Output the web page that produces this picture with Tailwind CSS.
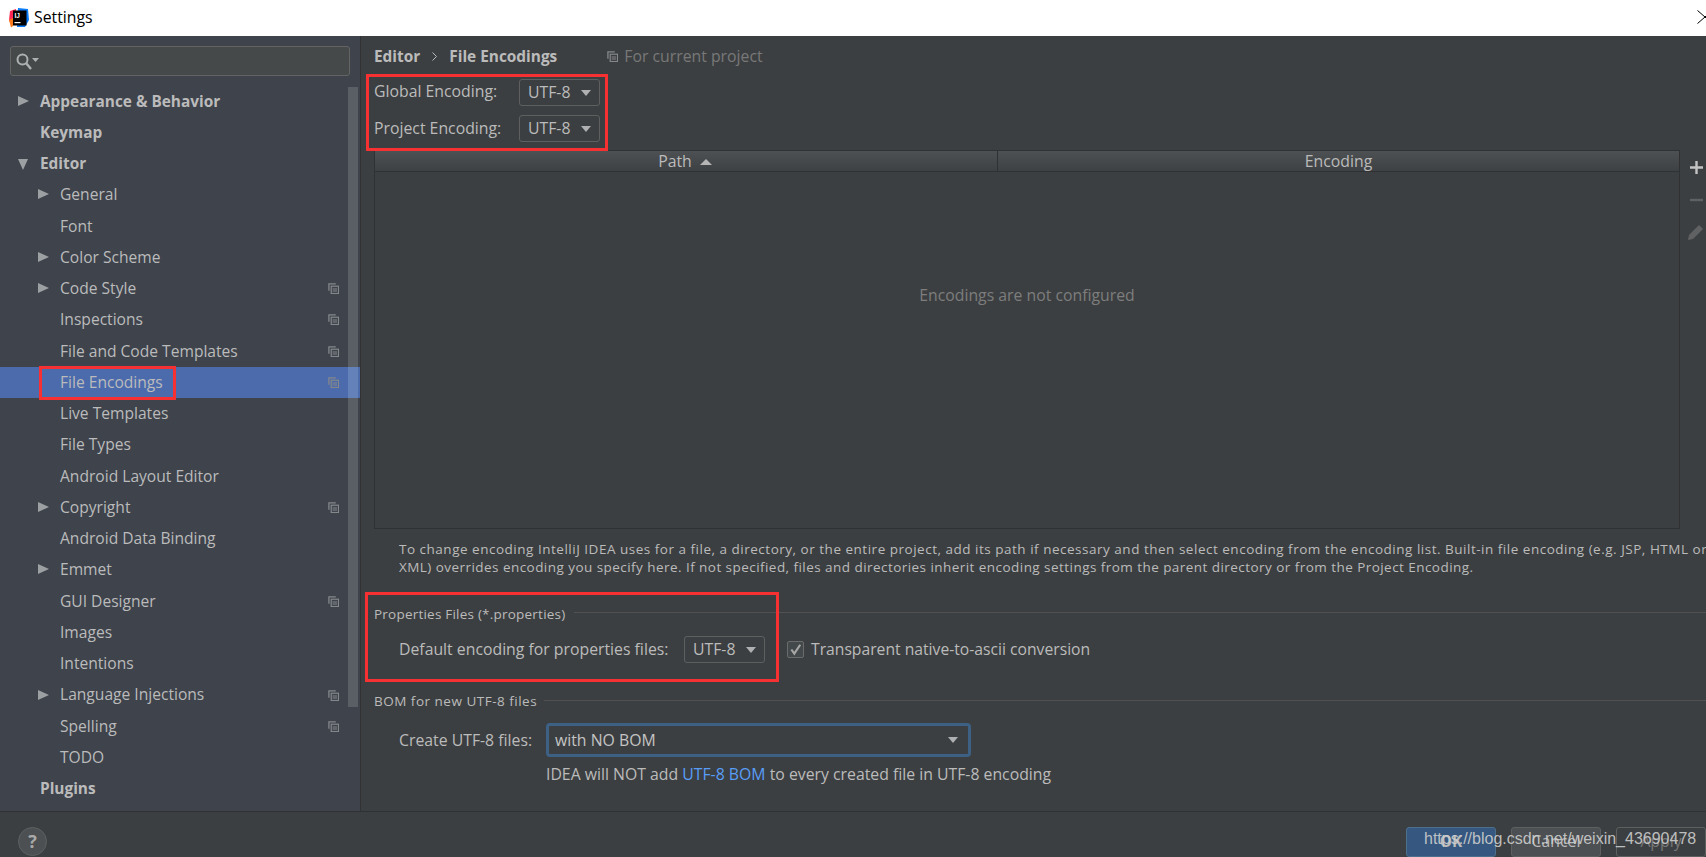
<!DOCTYPE html>
<html lang="en">
  <head>
    <meta charset="UTF-8" />
    <title>Settings</title>
    <script src="https://cdn.jsdelivr.net/npm/@tailwindcss/browser@4"></script>
  </head>
  <body class="relative h-screen overflow-hidden flex flex-col bg-[#3c3f41] text-[#bbbbbb] font-['Open_Sans',sans-serif] text-[15.8px]">
    <svg class="hidden">
      <symbol id="copy" viewBox="0 0 12 12">
        <path d="M1 8.500V1h7.500" fill="none" stroke="#85888b" stroke-width="1.400" />
        <rect x="3.500" y="3.500" width="8" height="8" fill="none" stroke="#85888b" stroke-width="1.300" />
        <path d="M5 6.500h5M5 8.700h5" stroke="#85888b" stroke-width="1.100" />
      </symbol>
    </svg>

    <!-- TITLE BAR -->
    <header class="h-9 shrink-0 bg-white flex items-center text-black relative pb-px">
      <svg class="ml-[9px] w-5 h-5" viewBox="0 0 20 20">
        <path d="M1 3l6-2v14l-4 3-3-6z" fill="#fe2857" />
        <path d="M0 12l4-2v8l-2 1.500z" fill="#fe7a1c" />
        <path d="M9 0l10 1 1 11-4 7H8z" fill="#087cfa" />
        <rect x="4" y="2.500" width="13.500" height="15" fill="#000" />
        <text x="5.500" y="9.500" font-size="6.500" font-weight="700" fill="#fff" font-family="Liberation Sans">IJ</text>
        <rect x="5.500" y="14" width="6" height="1.200" fill="#fff" />
      </svg>
      <span class="ml-[5px]">Settings</span>
      <svg class="absolute right-0 top-[10px] w-[9px] h-[14px]" viewBox="0 0 9 14">
        <path d="M0.500 0.500L8 7L0.500 13.500M8 7L9 6M8 7L9 8" fill="none" stroke="#000" stroke-width="1" />
      </svg>
    </header>

    <div class="flex-1 min-h-0 flex">
      <!-- SIDEBAR -->
      <aside class="w-[361px] shrink-0 bg-[#3e434c] border-r border-[#323232] relative text-[15.6px]">
        <div class="mx-[10px] mt-[10px] h-[30px] bg-[#45494a] border border-[#646464] rounded-[3px] flex items-center pl-[5px]">
          <svg class="w-[23px] h-[17px]" viewBox="0 0 23 17">
            <circle cx="6.500" cy="6.500" r="5" fill="none" stroke="#aeb0b2" stroke-width="2" />
            <path d="M10 10l5 6" stroke="#aeb0b2" stroke-width="2.400" />
            <path d="M16 5h7l-3.500 4z" fill="#aeb0b2" />
          </svg>
        </div>
        <div id="tree" class="mt-[9.500px]"></div>
        <!-- scrollbar -->
        <div class="absolute left-[348px] top-[51px] w-[10px] h-[620px] bg-white/15"></div>
      </aside>

      <!-- MAIN PANEL -->
      <main class="flex-1 min-w-0 pl-[13px] overflow-hidden">
        <div class="h-[41px] flex items-center">
          <b class="font-bold text-[15.4px]">Editor</b>
          <svg class="mx-[12px] w-[5px] h-[9px]" viewBox="0 0 5 9"><path d="M0.500 0.500L4.500 4.500L0.500 8.500" fill="none" stroke="#bbbbbb" /></svg>
          <b class="font-bold text-[15.4px]">File Encodings</b>
          <svg class="ml-[50px] w-[11px] h-[11px]"><use href="#copy" /></svg>
          <span class="ml-[6px] text-[#787878]">For current project</span>
        </div>

        <div class="h-[27px] mt-[2px] flex items-center">
          <span class="w-[145px] pb-[2px]">Global Encoding:</span>
          <div class="w-[81px] h-[27px] bg-[#3c3f41] border border-[#5e6060] rounded-[3px] flex items-center justify-between pl-[8px] pr-[8px]">
            <span class="pt-px">UTF-8</span><span class="w-0 h-0 border-x-[5.500px] border-x-transparent border-t-[6px] border-t-[#aeb0b2]"></span>
          </div>
        </div>
        <div class="h-[27px] mt-[9px] flex items-center">
          <span class="w-[145px]">Project Encoding:</span>
          <div class="w-[81px] h-[27px] bg-[#3c3f41] border border-[#5e6060] rounded-[3px] flex items-center justify-between pl-[8px] pr-[8px]">
            <span class="pt-px">UTF-8</span><span class="w-0 h-0 border-x-[5.500px] border-x-transparent border-t-[6px] border-t-[#aeb0b2]"></span>
          </div>
        </div>

        <!-- Path / Encoding table -->
        <div class="mt-[8px] flex">
          <div class="w-[1306px] h-[379px] border border-t-0 border-[#2f3133] flex flex-col shrink-0">
            <div class="h-[22px] shrink-0 flex bg-gradient-to-b from-[#4e5153] to-[#3e4143] border-y border-[#2f3133]">
              <div class="w-[623px] border-r border-[#2f3133] flex items-center justify-center gap-2 pt-px pr-[2px]">
                Path<span class="w-0 h-0 border-x-[6px] border-x-transparent border-b-[6px] border-b-[#b5b5b5]"></span>
              </div>
              <div class="flex-1 flex items-center justify-center pt-px">Encoding</div>
            </div>
            <div class="flex-1 flex justify-center text-[#7d7d7d] pt-[112px]">Encodings are not configured</div>
          </div>
          <div class="flex-1 flex flex-col items-center pt-[11px] pl-[6px]">
            <svg class="w-[13px] h-[13px]" viewBox="0 0 13 13"><path d="M6.500 0v13M0 6.500h13" stroke="#c4c4c4" stroke-width="2.400" /></svg>
            <svg class="mt-[20px] w-[13px] h-[12px]" viewBox="0 0 13 12"><path d="M0 6h13" stroke="#5f6163" stroke-width="2.400" /></svg>
            <svg class="mt-[17px] w-[18px] h-[18px]" viewBox="0 0 18 18"><path d="M1 17l1-5L12 2l4 4L6 16z" fill="#5f6163" /></svg>
          </div>
        </div>

        <p class="ml-[25px] mt-[11px] text-[13.500px] leading-[18px] tracking-[0.45px] whitespace-nowrap">
          <span class="tracking-[0.51px]">To change encoding IntelliJ IDEA uses for a file, a directory, or the entire project, add its path if necessary and then select encoding from the encoding list. Built-in file encoding (e.g. JSP, HTML or</span><br />
          XML) overrides encoding you specify here. If not specified, files and directories inherit encoding settings from the parent directory or from the Project Encoding.
        </p>

        <!-- Properties Files -->
        <div class="mt-[29px] h-[18px] flex items-center text-[13.500px] tracking-[0.22px]">
          <span>Properties Files (*.properties)</span>
          <span class="flex-1 ml-[9px] h-px bg-[#515151] -translate-y-[2px]"></span>
        </div>
        <div class="mt-[13px] h-[27px] ml-[25px] flex items-center">
          <span class="w-[285px]">Default encoding for properties files:</span>
          <div class="w-[81px] h-[27px] border border-[#5e6060] rounded-[3px] flex items-center justify-between pl-[8px] pr-[8px]">
            <span>UTF-8</span><span class="w-0 h-0 border-x-[5.500px] border-x-transparent border-t-[6px] border-t-[#aeb0b2]"></span>
          </div>
          <div class="ml-[22px] w-[17px] h-[17px] bg-[#43494a] border border-[#6b6b6b] rounded-[2px] flex items-center justify-center">
            <svg class="w-[13px] h-[13px]" viewBox="0 0 11 11"><path d="M2 5.500L4.500 9L9.500 1.500" fill="none" stroke="#a7a7a7" stroke-width="1.800" /></svg>
          </div>
          <span class="ml-[7px] text-[15.700px]">Transparent native-to-ascii conversion</span>
        </div>

        <!-- BOM -->
        <div class="mt-[30px] h-[18px] flex items-center text-[13.500px] tracking-[0.5px]">
          <span class="-translate-y-px">BOM for new UTF-8 files</span>
          <span class="flex-1 ml-[7px] h-px bg-[#515151] -translate-y-[2px]"></span>
        </div>
        <div class="mt-[12px] h-[34px] ml-[25px] flex items-center">
          <span class="w-[147px] pt-[2px]">Create UTF-8 files:</span>
          <div class="w-[425px] h-[34px] bg-[#3c3f41] border-[3px] border-[#3d6185] rounded-[4px] flex items-center justify-between pl-[6px] pr-[10px] text-[#c4c4c4]">
            <span class="pt-[2px]">with NO BOM</span><span class="w-0 h-0 border-x-[5.500px] border-x-transparent border-t-[6px] border-t-[#aeb0b2]"></span>
          </div>
        </div>
        <div class="ml-[172px] mt-[8px] h-[20px] flex items-center whitespace-pre">IDEA will NOT add <span class="text-[#589df6]">UTF-8 BOM</span> to every created file in UTF-8 encoding</div>
      </main>
    </div>

    <!-- BOTTOM BAR -->
    <footer class="h-[46px] shrink-0 border-t border-[#2f3133] flex items-start pt-[15px] relative">
      <div class="ml-[18px] w-[29px] h-[29px] rounded-full bg-[#4c5052] border border-[#5e6060] flex items-center justify-center font-bold text-[#a9a9a9] text-[18px]">?</div>
      <div class="ml-auto flex gap-[15px]">
        <div class="w-[90px] h-[30px] bg-[#365880] border border-[#4c708c] rounded-[3px] flex items-center justify-center font-bold text-[15.4px]">OK</div>
        <div class="w-[90px] h-[30px] bg-[#4c5052] border border-[#5e6060] rounded-[3px] flex items-center justify-center">Cancel</div>
        <div class="w-[90px] h-[30px] border border-[#5e6060] rounded-[3px] flex items-center justify-center text-[#777777]">Apply</div>
      </div>
    </footer>

    <!-- image watermark -->
    <div class="absolute left-[1424px] top-[829px] font-['Liberation_Sans',sans-serif] text-[16px] leading-[19px] text-[#cfcfcf]/90 whitespace-nowrap">https://blog.csdn.net/weixin_43690478</div>

    <!-- red annotation boxes -->
    <div class="absolute left-[366px] top-[74px] w-[242px] h-[77px] border-[3px] border-[#f73131]"></div>
    <div class="absolute left-[39px] top-[366px] w-[137px] h-[34px] border-[3px] border-[#f73131]"></div>
    <div class="absolute left-[365px] top-[592px] w-[414px] h-[90px] border-[3px] border-[#f73131]"></div>

    <script>
      // [label, indent, arrow, project icon]
      const rows = [
        ["Appearance & Behavior", 0, "right", false],
        ["Keymap", 0, "", false],
        ["Editor", 0, "down", false],
        ["General", 1, "right", false],
        ["Font", 1, "", false],
        ["Color Scheme", 1, "right", false],
        ["Code Style", 1, "right", true],
        ["Inspections", 1, "", true],
        ["File and Code Templates", 1, "", true],
        ["File Encodings", 1, "", true],
        ["Live Templates", 1, "", false],
        ["File Types", 1, "", false],
        ["Android Layout Editor", 1, "", false],
        ["Copyright", 1, "right", true],
        ["Android Data Binding", 1, "", false],
        ["Emmet", 1, "right", false],
        ["GUI Designer", 1, "", true],
        ["Images", 1, "", false],
        ["Intentions", 1, "", false],
        ["Language Injections", 1, "right", true],
        ["Spelling", 1, "", true],
        ["TODO", 1, "", false],
        ["Plugins", 0, "", false],
      ];

      document.getElementById("tree").innerHTML = rows
        .map(([label, indent, arrow, icon]) => {
          const pad = indent ? "pl-[60px]" : "pl-[40px]";
          const weight = indent ? "" : "font-bold text-[15.4px]";
          const bg = label === "File Encodings" ? "bg-[#4b6bad]" : "";
          const arrowLeft = indent ? "left-[38px]" : "left-[18px]";
          let mark = "";
          if (arrow === "right")
            mark = `<span class="absolute ${arrowLeft} top-[10px] w-0 h-0 border-y-[5.500px] border-y-transparent border-l-[11px] border-l-[#9da0a3]"></span>`;
          if (arrow === "down")
            mark = `<span class="absolute ${arrowLeft} top-[11px] w-0 h-0 border-x-[5.500px] border-x-transparent border-t-[11px] border-t-[#9da0a3]"></span>`;
          const copy = icon
            ? `<svg class="absolute left-[328px] top-[10px] w-[11px] h-[11px]"><use href="#copy" /></svg>`
            : "";
          return `<div class="relative h-[31.27px] flex items-center whitespace-nowrap ${pad} ${weight} ${bg}">${mark}${label.replace("&", "&amp;")}${copy}</div>`;
        })
        .join("");
    </script>
  </body>
</html>
